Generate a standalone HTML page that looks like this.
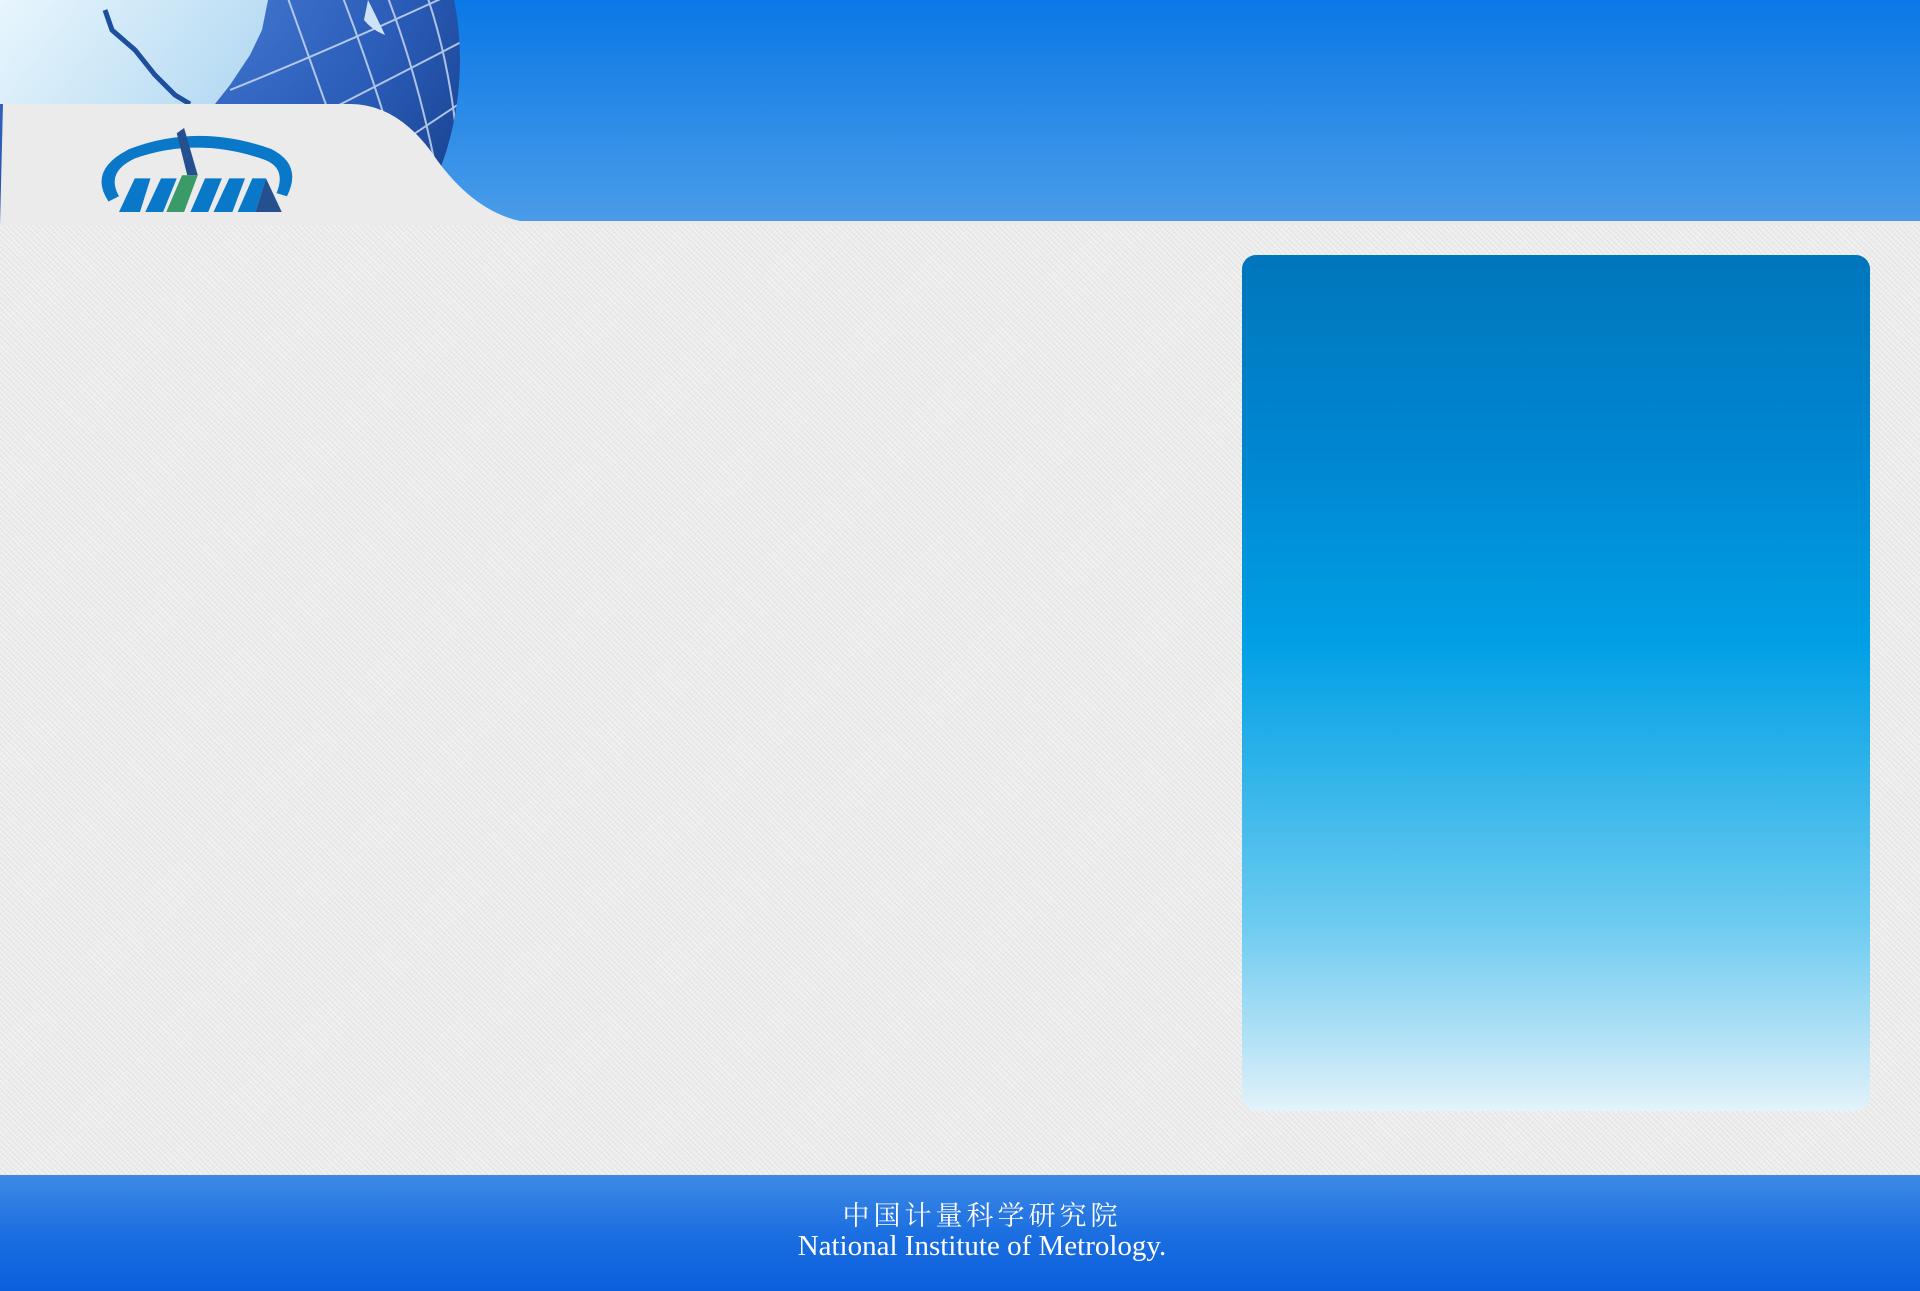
<!DOCTYPE html>
<html><head><meta charset="utf-8"><style>
html,body{margin:0;padding:0}
body{width:1920px;height:1291px;position:relative;overflow:hidden;background:#ececec;font-family:"Liberation Serif","Noto Serif CJK SC",serif}
.tex{position:absolute;inset:0;background:repeating-linear-gradient(45deg,rgba(255,255,255,.35) 0 2px,rgba(0,0,0,0) 2px 4px),repeating-linear-gradient(-45deg,rgba(200,200,200,.25) 0 1px,rgba(0,0,0,0) 1px 3px),#ebebeb}
.box{position:absolute;left:1242px;top:255px;width:628px;height:856px;border-radius:14px;background:linear-gradient(#0076bc 0%,#0088d2 25%,#009fe5 45%,#2fb3ea 60%,#6ccbf0 78%,#b4e2f6 92%,#e3f3fb 100%)}
.foot{position:absolute;left:0;top:1175px;width:1920px;height:116px;background:linear-gradient(#3e8ae6,#1c6fe0 50%,#0b5fdc);}
.cn{position:absolute;top:1198px;left:22px;width:100%;text-align:center;color:#fff;font-size:27px;letter-spacing:4px;font-family:"Noto Serif CJK SC",serif;line-height:32px}
.en{position:absolute;top:1229px;left:22px;width:100%;text-align:center;color:#fff;font-size:29px;line-height:34px}
</style></head><body>
<div class="tex"></div>
<svg style="position:absolute;left:0;top:0" width="1920" height="225" viewBox="0 0 1920 225">
<defs>
<linearGradient id="hb" x1="0" y1="0" x2="0" y2="1"><stop offset="0" stop-color="#0a78e6"/><stop offset="1" stop-color="#4a9ce8"/></linearGradient>
<linearGradient id="lb" x1="0" y1="0" x2="1" y2="0.3"><stop offset="0" stop-color="#e8f6fd"/><stop offset="1" stop-color="#b9dcf3"/></linearGradient>
<radialGradient id="gl" cx="0.5" cy="0.3" r="0.7"><stop offset="0" stop-color="#4f86dc"/><stop offset="0.6" stop-color="#2a5cb8"/><stop offset="1" stop-color="#143c86"/></radialGradient>
<clipPath id="gc"><circle cx="150" cy="60" r="310"/></clipPath>
</defs>
<rect x="0" y="0" width="1920" height="221" fill="url(#hb)"/>
<circle cx="150" cy="60" r="310" fill="url(#gl)"/>
<g clip-path="url(#gc)" stroke="#c8d8f0" stroke-width="2" fill="none" opacity="0.85">
<path d="M285 -10 Q310 60 335 130"/><path d="M340 -10 Q375 80 400 170"/><path d="M385 -10 Q420 80 440 190"/><path d="M425 -10 Q450 60 458 150"/>
<path d="M230 90 Q330 50 460 -10"/><path d="M250 150 Q350 100 465 40"/><path d="M300 210 Q390 150 465 100"/><path d="M400 220 Q440 190 465 160"/>
</g>
<path d="M0 0 L268 0 L262 30 L250 55 L230 85 L215 104 L0 104 Z" fill="url(#lb)"/>
<path d="M105 10 L112 30 L135 50 L155 75 L175 95 L190 104" stroke="#1e4f9c" stroke-width="5" fill="none"/>
<path d="M368 0 Q378 20 385 35 Q372 30 364 20 Z" fill="#cfe3f7"/>
<path d="M3 104 L350 104 Q395 104 430 150 Q470 210 520 221 L1920 221 L1920 225 L0 225 Z" fill="#ebebeb"/>
<g transform="translate(98,128) scale(1.05)">
<path d="M10 70 Q-10 40 30 20 Q95 -5 165 20 Q195 35 180 65 L170 62 Q180 38 158 30 Q95 8 35 29 Q7 42 20 65 Z" fill="#0a78c8"/>
<path d="M75 5 L82 0 L95 45 L85 45 Z" fill="#24508f"/>
<path d="M20 80 L35 48 L50 48 L40 80 Z M45 80 L60 48 L75 48 L62 80 Z" fill="#0a78c8"/>
<path d="M65 80 L80 45 L95 45 L82 80 Z" fill="#3a9a68"/>
<path d="M88 80 L102 48 L118 48 L105 80 Z M110 80 L125 48 L140 48 L128 80 Z M133 80 L147 48 L160 48 L150 80 Z" fill="#0a78c8"/>
<path d="M150 80 L160 48 L175 80 Z" fill="#24508f"/>
</g>
</svg>
<div class="box"></div>
<div class="foot"></div>
<div class="cn">中国计量科学研究院</div>
<div class="en">National Institute of Metrology.</div>
</body></html>
